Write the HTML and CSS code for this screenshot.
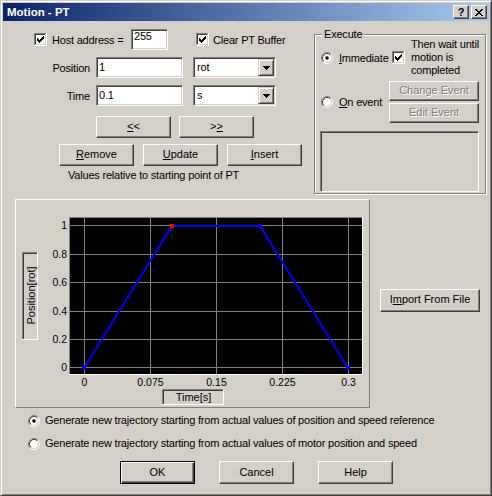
FILE: index.html
```html
<!DOCTYPE html>
<html>
<head>
<meta charset="utf-8">
<title>Motion - PT</title>
<link rel="stylesheet" href="styles.css">
</head>
<body>
<div class="window">
  <div class="titlebar">
    <span class="title">Motion - PT</span>
    <span class="tbtn tb-help">?</span>
    <span class="tbtn tb-close">
      <svg width="8" height="7" viewBox="0 0 8 7" shape-rendering="crispEdges"><path d="M0 0h2v1H0zM6 0h2v1H6zM1 1h2v1H1zM5 1h2v1H5zM2 2h4v1H2zM3 3h2v1H3zM2 4h4v1H2zM1 5h2v1H1zM5 5h2v1H5zM0 6h2v1H0zM6 6h2v1H6z" fill="#000"/></svg>
    </span>
  </div>
  <div class="client">
    <div class="top">
      <div class="form">
        <div class="row row1">
          <div class="chk chk-host">
            <svg class="cb" width="13" height="13" viewBox="0 0 13 13" shape-rendering="crispEdges"><rect width="13" height="13" fill="#fff"/><path d="M0 0h13v1H0zM0 0h1v13H0z" fill="#808080"/><path d="M1 1h11v1H1zM1 1h1v11H1z" fill="#404040"/><path d="M0 12h13v1H0zM12 0h1v13h-1z" fill="#fff"/><path d="M1 11h11v1H1zM11 1h1v11h-1z" fill="#d4d0c8"/><path d="M9 3h1v1H9zM8 4h2v1H8zM3 5h1v1H3zM7 5h3v1H7zM3 6h2v1H3zM6 6h3v1H6zM3 7h5v1H3zM4 8h3v1H4zM5 9h1v1H5z" fill="#000"/></svg>
            <span>Host address =</span>
          </div>
          <div class="edit edit-host">255</div>
          <div class="chk chk-clear">
            <svg class="cb" width="13" height="13" viewBox="0 0 13 13" shape-rendering="crispEdges"><rect width="13" height="13" fill="#fff"/><path d="M0 0h13v1H0zM0 0h1v13H0z" fill="#808080"/><path d="M1 1h11v1H1zM1 1h1v11H1z" fill="#404040"/><path d="M0 12h13v1H0zM12 0h1v13h-1z" fill="#fff"/><path d="M1 11h11v1H1zM11 1h1v11h-1z" fill="#d4d0c8"/><path d="M9 3h1v1H9zM8 4h2v1H8zM3 5h1v1H3zM7 5h3v1H7zM3 6h2v1H3zM6 6h3v1H6zM3 7h5v1H3zM4 8h3v1H4zM5 9h1v1H5z" fill="#000"/></svg>
            <span>Clear PT Buffer</span>
          </div>
        </div>
        <div class="row row-field">
          <span class="flabel">Position</span>
          <div class="edit edit-val">1</div>
          <div class="combo">
            <span class="combo-text">rot</span>
            <span class="dd"><svg width="7" height="4" viewBox="0 0 7 4" shape-rendering="crispEdges"><path d="M0 0h7v1H0zM1 1h5v1H1zM2 2h3v1H2zM3 3h1v1H3z" fill="#000"/></svg></span>
          </div>
        </div>
        <div class="row row-field">
          <span class="flabel">Time</span>
          <div class="edit edit-val">0.1</div>
          <div class="combo">
            <span class="combo-text">s</span>
            <span class="dd"><svg width="7" height="4" viewBox="0 0 7 4" shape-rendering="crispEdges"><path d="M0 0h7v1H0zM1 1h5v1H1zM2 2h3v1H2zM3 3h1v1H3z" fill="#000"/></svg></span>
          </div>
        </div>
        <div class="row row-nav">
          <div class="btn btn-nav"><span><u>&lt;</u>&lt;</span></div>
          <div class="btn btn-nav"><span>&gt;<u>&gt;</u></span></div>
        </div>
        <div class="row row-edit">
          <div class="btn btn-std"><span><u>R</u>emove</span></div>
          <div class="btn btn-std"><span><u>U</u>pdate</span></div>
          <div class="btn btn-std"><span><u>I</u>nsert</span></div>
        </div>
        <div class="note">Values relative to starting point of PT</div>
      </div>

      <div class="group">
        <div class="legend">Execute</div>
        <div class="g-row g-row1">
          <div class="rlabel">
            <svg class="rd" width="12" height="12" viewBox="0 0 12 12"><circle cx="6" cy="6" r="4.5" fill="#fff"/><path d="M2.11 9.89A5.5 5.5 0 0 1 9.89 2.11" fill="none" stroke="#808080"/><path d="M9.89 2.11A5.5 5.5 0 0 1 2.11 9.89" fill="none" stroke="#fff"/><path d="M2.82 9.18A4.5 4.5 0 0 1 9.18 2.82" fill="none" stroke="#404040"/><path d="M9.18 2.82A4.5 4.5 0 0 1 2.82 9.18" fill="none" stroke="#d4d0c8"/><circle cx="6" cy="6" r="1.8" fill="#000"/></svg>
            <span><u>I</u>mmediate</span>
          </div>
          <svg class="cb" width="13" height="13" viewBox="0 0 13 13" shape-rendering="crispEdges"><rect width="13" height="13" fill="#fff"/><path d="M0 0h13v1H0zM0 0h1v13H0z" fill="#808080"/><path d="M1 1h11v1H1zM1 1h1v11H1z" fill="#404040"/><path d="M0 12h13v1H0zM12 0h1v13h-1z" fill="#fff"/><path d="M1 11h11v1H1zM11 1h1v11h-1z" fill="#d4d0c8"/><path d="M9 3h1v1H9zM8 4h2v1H8zM3 5h1v1H3zM7 5h3v1H7zM3 6h2v1H3zM6 6h3v1H6zM3 7h5v1H3zM4 8h3v1H4zM5 9h1v1H5z" fill="#000"/></svg>
          <span class="wait">Then wait until<br>motion is<br>completed</span>
        </div>
        <div class="g-row g-row2">
          <div class="rlabel">
            <svg class="rd" width="12" height="12" viewBox="0 0 12 12"><circle cx="6" cy="6" r="4.5" fill="#fff"/><path d="M2.11 9.89A5.5 5.5 0 0 1 9.89 2.11" fill="none" stroke="#808080"/><path d="M9.89 2.11A5.5 5.5 0 0 1 2.11 9.89" fill="none" stroke="#fff"/><path d="M2.82 9.18A4.5 4.5 0 0 1 9.18 2.82" fill="none" stroke="#404040"/><path d="M9.18 2.82A4.5 4.5 0 0 1 2.82 9.18" fill="none" stroke="#d4d0c8"/></svg>
            <span><u>O</u>n event</span>
          </div>
          <div class="evbtns">
            <div class="btn btn-ev disabled"><span>Change Event</span></div>
            <div class="btn btn-ev disabled"><span>Edit Event</span></div>
          </div>
        </div>
        <div class="listbox"></div>
      </div>
    </div>

    <div class="mid">
      <div class="chart">
        <svg class="plot" width="353" height="207" viewBox="16 200 353 207" font-family="Liberation Sans, Arial, sans-serif" font-size="10.5">
          <rect x="69" y="217" width="294" height="158" fill="#fff"/>
          <rect x="69" y="217" width="293" height="157" fill="#808080"/>
          <rect x="70" y="218" width="292" height="156" fill="#000"/>
          <g stroke="#808080" stroke-width="1" shape-rendering="crispEdges">
            <path d="M84.5 218V374M150.5 218V374M216.5 218V374M282.5 218V374M348.5 218V374"/>
            <path d="M70 225.5H362M70 254.5H362M70 282.5H362M70 311.5H362M70 339.5H362M70 367.5H362"/>
          </g>
          <polyline points="84,368 172,226 260,226 348,368" fill="none" stroke="#0000ff" stroke-width="2"/>
          <rect x="82" y="366" width="4" height="4" fill="#0000ff"/>
          <rect x="258" y="224" width="4" height="4" fill="#0000ff"/>
          <rect x="346" y="366" width="4" height="4" fill="#0000ff"/>
          <rect x="170" y="224" width="4" height="4" fill="#ff0000"/>
          <g fill="#000" text-anchor="end">
            <text x="67" y="229.3">1</text>
            <text x="67" y="258.3">0.8</text>
            <text x="67" y="286.3">0.6</text>
            <text x="67" y="315.3">0.4</text>
            <text x="67" y="343.3">0.2</text>
            <text x="67" y="371.3">0</text>
          </g>
          <g fill="#000" text-anchor="middle">
            <text x="84.5" y="385.5">0</text>
            <text x="150.5" y="385.5">0.075</text>
            <text x="216.5" y="385.5">0.15</text>
            <text x="282.5" y="385.5">0.225</text>
            <text x="348.5" y="385.5">0.3</text>
          </g>
          <g shape-rendering="crispEdges">
            <rect x="22" y="252" width="16" height="88" fill="#fff"/>
            <rect x="22" y="252" width="15" height="87" fill="#808080"/>
            <rect x="23" y="253" width="14" height="86" fill="#404040"/>
            <rect x="24" y="254" width="13" height="85" fill="#d4d0c8"/>
            <rect x="162" y="389" width="62" height="16" fill="#fff"/>
            <rect x="162" y="389" width="61" height="15" fill="#808080"/>
            <rect x="163" y="390" width="60" height="14" fill="#404040"/>
            <rect x="164" y="391" width="59" height="13" fill="#d4d0c8"/>
          </g>
          <text transform="translate(30.5 295.5) rotate(-90)" text-anchor="middle" dominant-baseline="central" font-size="11" letter-spacing="0.6">Position[rot]</text>
          <text x="193.5" y="401" text-anchor="middle" font-size="11">Time[s]</text>
        </svg>
      </div>
      <div class="btn btn-import"><span>I<u>m</u>port From File</span></div>
    </div>

    <div class="opt opt1">
      <svg class="rd" width="12" height="12" viewBox="0 0 12 12"><circle cx="6" cy="6" r="4.5" fill="#fff"/><path d="M2.11 9.89A5.5 5.5 0 0 1 9.89 2.11" fill="none" stroke="#808080"/><path d="M9.89 2.11A5.5 5.5 0 0 1 2.11 9.89" fill="none" stroke="#fff"/><path d="M2.82 9.18A4.5 4.5 0 0 1 9.18 2.82" fill="none" stroke="#404040"/><path d="M9.18 2.82A4.5 4.5 0 0 1 2.82 9.18" fill="none" stroke="#d4d0c8"/><circle cx="6" cy="6" r="1.8" fill="#000"/></svg>
      <span>Generate new trajectory starting from actual values of position and speed reference</span>
    </div>
    <div class="opt opt2">
      <svg class="rd" width="12" height="12" viewBox="0 0 12 12"><circle cx="6" cy="6" r="4.5" fill="#fff"/><path d="M2.11 9.89A5.5 5.5 0 0 1 9.89 2.11" fill="none" stroke="#808080"/><path d="M9.89 2.11A5.5 5.5 0 0 1 2.11 9.89" fill="none" stroke="#fff"/><path d="M2.82 9.18A4.5 4.5 0 0 1 9.18 2.82" fill="none" stroke="#404040"/><path d="M9.18 2.82A4.5 4.5 0 0 1 2.82 9.18" fill="none" stroke="#d4d0c8"/></svg>
      <span>Generate new trajectory starting from actual values of motor position and speed</span>
    </div>

    <div class="bottom">
      <div class="btn btn-dlg btn-default"><span>OK</span></div>
      <div class="btn btn-dlg"><span>Cancel</span></div>
      <div class="btn btn-dlg"><span>Help</span></div>
    </div>
  </div>
</div>
</body>
</html>
```
FILE: styles.css
```css
* { box-sizing: border-box; }
html, body { margin: 0; padding: 0; }
body {
  font-family: "Liberation Sans", Arial, sans-serif;
  font-size: 11px;
  letter-spacing: -0.2px;
  color: #000;
  background: #d4d0c8;
}
u { text-decoration: underline; text-underline-offset: 1px; }

.window {
  width: 492px;
  height: 496px;
  background: #d4d0c8;
  border: 1px solid;
  border-color: #d4d0c8 #404040 #404040 #d4d0c8;
  box-shadow: inset 1px 1px 0 #fff, inset -1px -1px 0 #808080;
  padding: 2px;
  overflow: hidden;
}

/* title bar */
.titlebar {
  height: 18px;
  display: flex;
  align-items: center;
  gap: 2px;
  padding: 0 2px;
  background: linear-gradient(90deg, #0a246a, #a6caf0);
}
.title {
  flex: 1;
  color: #fff;
  font-weight: bold;
  font-size: 11.5px;
  letter-spacing: 0;
  padding-left: 2px;
  line-height: 18px;
}
.tbtn {
  width: 16px;
  height: 14px;
  display: flex;
  align-items: center;
  justify-content: center;
  background: #d4d0c8;
  border: 1px solid;
  border-color: #fff #404040 #404040 #fff;
  box-shadow: inset -1px -1px 0 #808080;
  font-weight: bold;
  font-size: 11px;
  letter-spacing: 0;
  line-height: 12px;
}
.tb-help { padding-bottom: 1px; }
.tb-close svg { display: block; }

/* common controls */
.btn {
  display: flex;
  align-items: center;
  justify-content: center;
  background: #d4d0c8;
  border: 1px solid;
  border-color: #fff #404040 #404040 #fff;
  box-shadow: inset -1px -1px 0 #808080;
  line-height: 13px;
  padding-bottom: 2px;
  white-space: nowrap;
  letter-spacing: 0;
}
.btn.disabled { color: #808080; text-shadow: 1px 1px 0 #fff; }
.btn-default {
  border: 1px solid #000;
  box-shadow: inset 1px 1px 0 #fff, inset -1px -1px 0 #404040, inset -2px -2px 0 #808080;
}

.edit {
  background: #fff;
  border: 1px solid;
  border-color: #808080 #fff #fff #808080;
  box-shadow: inset 1px 1px 0 #404040, inset -1px -1px 0 #d4d0c8;
  height: 21px;
  padding: 0 2px;
  white-space: nowrap;
}

.cb, .rd { display: block; flex: none; }

/* top section */
.top { display: flex; align-items: flex-start; }
.form { width: 311px; flex: none; }
.row { display: flex; align-items: center; }

.row1 { margin-top: 8px; height: 21px; }
.chk { display: flex; align-items: center; gap: 5px; }
.chk-host { margin-left: 31px; width: 97px; }
.chk-clear { margin-left: 28px; gap: 4px; }
.edit-host { width: 37px; line-height: 13px; align-self: flex-start; }

.row-field { margin-top: 7px; height: 21px; }
.flabel { width: 87px; text-align: right; }
.edit-val { width: 87px; margin-left: 6px; line-height: 18px; padding-left: 2px; }
.combo {
  width: 83px;
  height: 21px;
  margin-left: 10px;
  display: flex;
  align-items: center;
  background: #fff;
  border: 1px solid;
  border-color: #808080 #fff #fff #808080;
  box-shadow: inset 1px 1px 0 #404040, inset -1px -1px 0 #d4d0c8;
  padding: 1px;
}
.combo-text { flex: 1; padding-left: 2px; line-height: 17px; }
.dd {
  width: 16px;
  height: 17px;
  display: flex;
  align-items: center;
  justify-content: center;
  background: #d4d0c8;
  border: 1px solid;
  border-color: #d4d0c8 #404040 #404040 #d4d0c8;
  box-shadow: inset 1px 1px 0 #fff, inset -1px -1px 0 #808080;
}
.dd svg { display: block; }

.row-nav { margin-top: 10px; gap: 8px; padding-left: 93px; }
.btn-nav { width: 75px; height: 22px; }
.row-edit { margin-top: 6px; gap: 9px; padding-left: 56px; }
.btn-std { width: 75px; height: 22px; }
.note { margin: 3px 0 0 65px; line-height: 13px; }

/* execute group */
.group {
  margin-top: 13px;
  width: 172px;
  height: 160px;
  flex: none;
  border: 1px solid #808080;
  box-shadow: inset 1px 1px 0 #fff, 1px 1px 0 #fff;
}
.legend {
  width: fit-content;
  margin: -7px 0 -3px 7px;
  padding: 0 2px;
  background: #d4d0c8;
  line-height: 13px;
}
.g-row { display: flex; align-items: center; }
.g-row1 { height: 39px; }
.rlabel { display: flex; align-items: center; gap: 6px; margin-left: 6px; }
.g-row1 .rlabel { width: 71px; }
.wait { margin-left: 6px; line-height: 13px; }
.g-row2 { height: 42px; margin-top: 4px; }
.g-row2 .rlabel { width: 68px; }
.evbtns { display: flex; flex-direction: column; gap: 2px; }
.btn-ev { width: 90px; height: 20px; }
.listbox {
  margin: 8px 0 0 5px;
  width: 159px;
  height: 61px;
  border: 1px solid;
  border-color: #808080 #fff #fff #808080;
  box-shadow: inset 1px 1px 0 #404040, inset -1px -1px 0 #d4d0c8;
  background: #d4d0c8;
}

/* chart section */
.mid { display: flex; align-items: flex-start; margin-top: 5px; }
.chart {
  margin-left: 12px;
  width: 355px;
  height: 209px;
  flex: none;
  border: 1px solid;
  border-color: #fff #808080 #808080 #fff;
}
.plot { display: block; }
.plot text { letter-spacing: 0; }
.btn-import { margin: 90px 0 0 10px; width: 100px; height: 23px; }

/* options */
.opt { display: flex; align-items: center; height: 13px; gap: 5px; padding-left: 25px; line-height: 13px; white-space: nowrap; }
.opt1 { margin-top: 6px; }
.opt2 { margin-top: 10px; }

/* bottom buttons */
.bottom { display: flex; gap: 24px; margin-top: 11px; padding-left: 117px; }
.btn-dlg { width: 75px; height: 23px; padding-bottom: 1px; }
```
